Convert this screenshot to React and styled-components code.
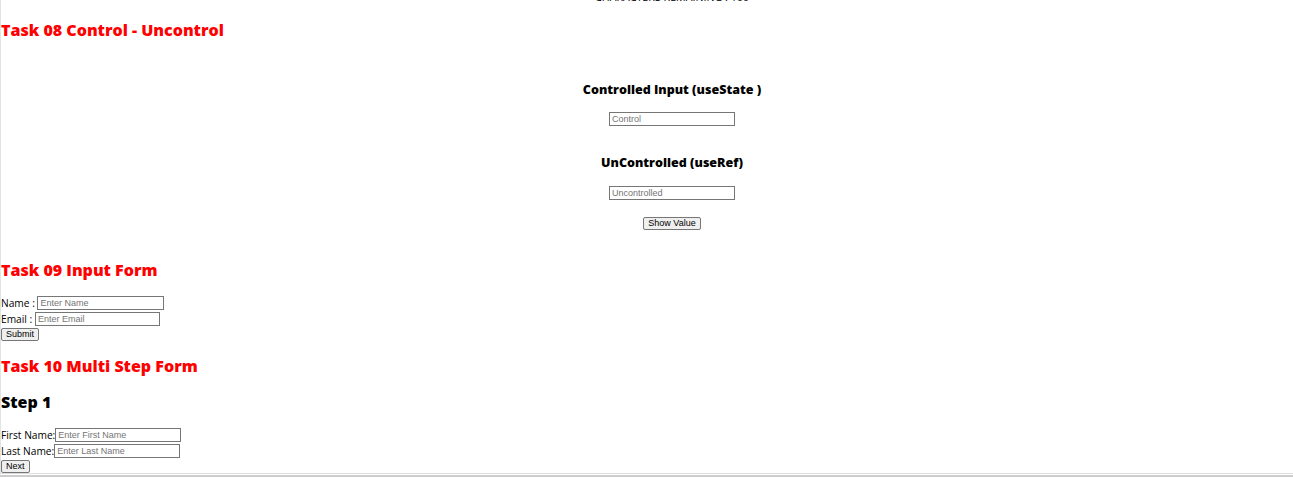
import React, { useRef, useState } from "react";
import styled, { createGlobalStyle } from "styled-components";

const GlobalStyle = createGlobalStyle`
  html, body {
    margin: 0;
    padding: 0;
    background: #fff;
    overflow: hidden;
  }
  body {
    font-family: "Open Sans", "Noto Sans", sans-serif;
    font-size: 10.2px;
    color: #000;
  }
`;

const Page = styled.div`
  height: 473px;
  border-left: 1px solid #e3e3e3;
  overflow: hidden;
`;

// bottom edge of the window (scroll track)
const Track = styled.div`
  height: 1px;
  border-top: 1px solid #dcdcdc;
  border-bottom: 2px solid #cdcdcd;
`;

const CutLine = styled.div`
  margin-top: -10px;
  margin-left: 50px;
  height: 14px;
  line-height: 14px;
  text-align: center;
  font-size: 10.7px;
`;

const TaskTitle = styled.h2`
  margin: ${(p) => p.$top}px 0 0;
  font-size: 16px;
  line-height: 21px;
  font-weight: 800;
  color: ${(p) => (p.$plain ? "#000" : "#ff0000")};
`;

const Centered = styled.div`
  margin-left: 50px;
  margin-top: 40px;
  display: flex;
  flex-direction: column;
  align-items: center;
`;

const SubTitle = styled.h3`
  margin: ${(p) => p.$top}px 0 ${(p) => p.$bottom}px;
  font-size: 12.5px;
  line-height: 17px;
  font-weight: 800;
`;

const TextBox = styled.input`
  box-sizing: border-box;
  width: ${(p) => p.$w || 126}px;
  height: 14px;
  margin: 0;
  padding: 0 2px;
  border: 1px solid #767676;
  border-radius: 0;
  font-family: "Liberation Sans", Arial, sans-serif;
  font-size: 9px;
  color: #000;
  outline: none;
  &::placeholder {
    color: #757575;
  }
`;

const Button = styled.button`
  box-sizing: border-box;
  height: 13px;
  margin: ${(p) => p.$top || 0}px 0 0;
  padding: 0 4px;
  border: 1px solid #767676;
  border-radius: 2px;
  background: #efefef;
  font-family: "Liberation Sans", Arial, sans-serif;
  font-size: 9px;
  line-height: 11px;
  color: #000;
  cursor: pointer;
`;

const Form = styled.div`
  margin-top: ${(p) => p.$top}px;
  display: flex;
  flex-direction: column;
  align-items: flex-start;
`;

const Row = styled.label`
  display: flex;
  align-items: center;
  height: 16px;
  white-space: pre;
  line-height: 16px;
`;

export default function App() {
  const [control, setControl] = useState("");
  const unRef = useRef(null);

  return (
    <>
      <GlobalStyle />
      <Page>
        <CutLine>CHARACTERS REMAINING : 100</CutLine>

        <TaskTitle $top={16}>Task 08 Control - Uncontrol</TaskTitle>
        <Centered>
          <SubTitle $top={0} $bottom={14}>
            Controlled Input (useState )
          </SubTitle>
          <TextBox
            placeholder="Control"
            value={control}
            onChange={(e) => setControl(e.target.value)}
          />
          <SubTitle $top={28} $bottom={15}>
            UnControlled (useRef)
          </SubTitle>
          <TextBox placeholder="Uncontrolled" ref={unRef} />
          <Button $top={17} onClick={() => alert(unRef.current?.value)}>
            Show Value
          </Button>
        </Centered>

        <TaskTitle $top={30}>Task 09 Input Form</TaskTitle>
        <Form $top={14}>
          <Row>
            Name : <TextBox placeholder="Enter Name" $w={127} />
          </Row>
          <Row>
            Email : <TextBox placeholder="Enter Email" $w={125} />
          </Row>
          <Button $top={1}>Submit</Button>
        </Form>

        <TaskTitle $top={15}>Task 10 Multi Step Form</TaskTitle>
        <TaskTitle $top={15} $plain>
          Step 1
        </TaskTitle>
        <Form $top={14}>
          <Row>
            First Name:<TextBox placeholder="Enter First Name" />
          </Row>
          <Row>
            Last Name:<TextBox placeholder="Enter Last Name" />
          </Row>
          <Button $top={1}>Next</Button>
        </Form>
      </Page>
      <Track />
    </>
  );
}
